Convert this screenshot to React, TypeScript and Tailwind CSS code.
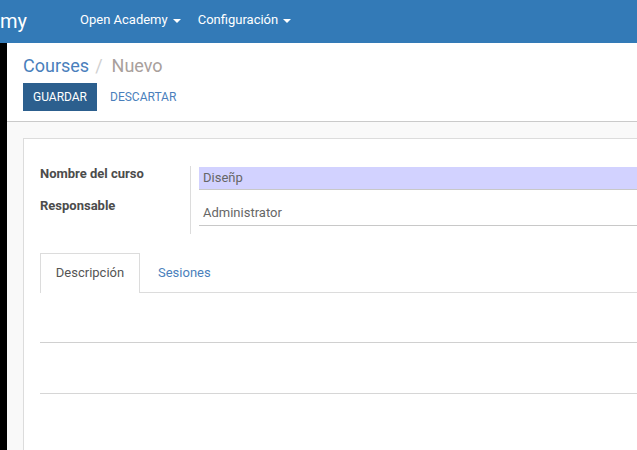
import React from 'react'

const font = { fontFamily: 'Roboto, "Liberation Sans", sans-serif' }

function Caret(): React.JSX.Element {
  return (
    <span className="ml-[5px] inline-block h-0 w-0 border-x-[4px] border-t-[4px] border-x-transparent border-t-white align-middle" />
  )
}

/** Odoo form view: new course record. */
export default function App(): React.JSX.Element {
  return (
    <div className="relative h-[450px] w-[637px] overflow-hidden bg-white" style={font}>
      <nav className="flex h-[43px] items-center bg-[#337ab7] text-white">
        <span className="-mt-[2px] w-[80px] text-[20px] leading-none">my</span>
        <span className="-mt-[3px] text-[13px]">
          Open Academy
          <Caret />
        </span>
        <span className="-mt-[3px] ml-[17px] text-[13px]">
          Configuración
          <Caret />
        </span>
      </nav>

      <div className="flex h-[407px]">
        <div className="w-[7px] shrink-0 bg-black" />
        <div className="flex min-w-0 flex-1 flex-col">
          <div className="h-[79px] shrink-0 border-b border-[#cacaca] bg-white pl-4">
            <div className="pt-[12px] text-[18px] leading-[22px]">
              <span className="text-[#4a7fbc]">Courses</span>
              <span className="ml-[6px] mr-[9px] text-[#d0d0d0]">/</span>
              <span className="text-[#a9a09c]">Nuevo</span>
            </div>
            <div className="mt-[6px] flex items-center">
              <button className="h-[28px] w-[74px] bg-[#2c5f8e] text-[12px] text-white">GUARDAR</button>
              <button className="ml-[13px] text-[12px] text-[#4a7fbc]">DESCARTAR</button>
            </div>
          </div>

          <div className="flex-1 bg-[#f9f9f9] pl-4 pt-4">
            <div className="h-full border-l border-t border-[#dcdcdc] bg-white pl-4 pt-[27px]">
              <div className="flex">
                <div className="w-[151px] shrink-0 border-r border-[#dcdcdc] pb-[20px] text-[13px] font-bold text-[#4c4c4c]">
                  <div className="h-[32px] leading-[16px]">Nombre del curso</div>
                  <div className="leading-[16px]">Responsable</div>
                </div>
                <div className="flex-1 pl-[8px] pt-[1px] text-[13px] text-[#666]">
                  <div className="h-[23px] border-b border-[#c8c8c8] bg-[#d2d2ff] pl-[4px] leading-[22px]">Diseñp</div>
                  <div className="mt-[11px] h-[25px] border-b border-[#c8c8c8] pl-[4px] pt-[1px] leading-[22px]">Administrator</div>
                </div>
              </div>

              <div className="mt-[19px] flex h-[40px]">
                <div className="flex w-[100px] items-center justify-center border-x border-t border-[#dcdcdc] bg-white pb-[1px] text-[13px] text-[#555]">
                  Descripción
                </div>
                <div className="flex flex-1 items-center border-b border-[#dcdcdc] pl-[18px] text-[13px] text-[#4a7fbc]">
                  Sesiones
                </div>
              </div>

              <div className="mt-[49px] border-t border-[#d0d0d0]" />
              <div className="mt-[50px] border-t border-[#d6d6d6]" />
            </div>
          </div>
        </div>
      </div>
    </div>
  )
}
